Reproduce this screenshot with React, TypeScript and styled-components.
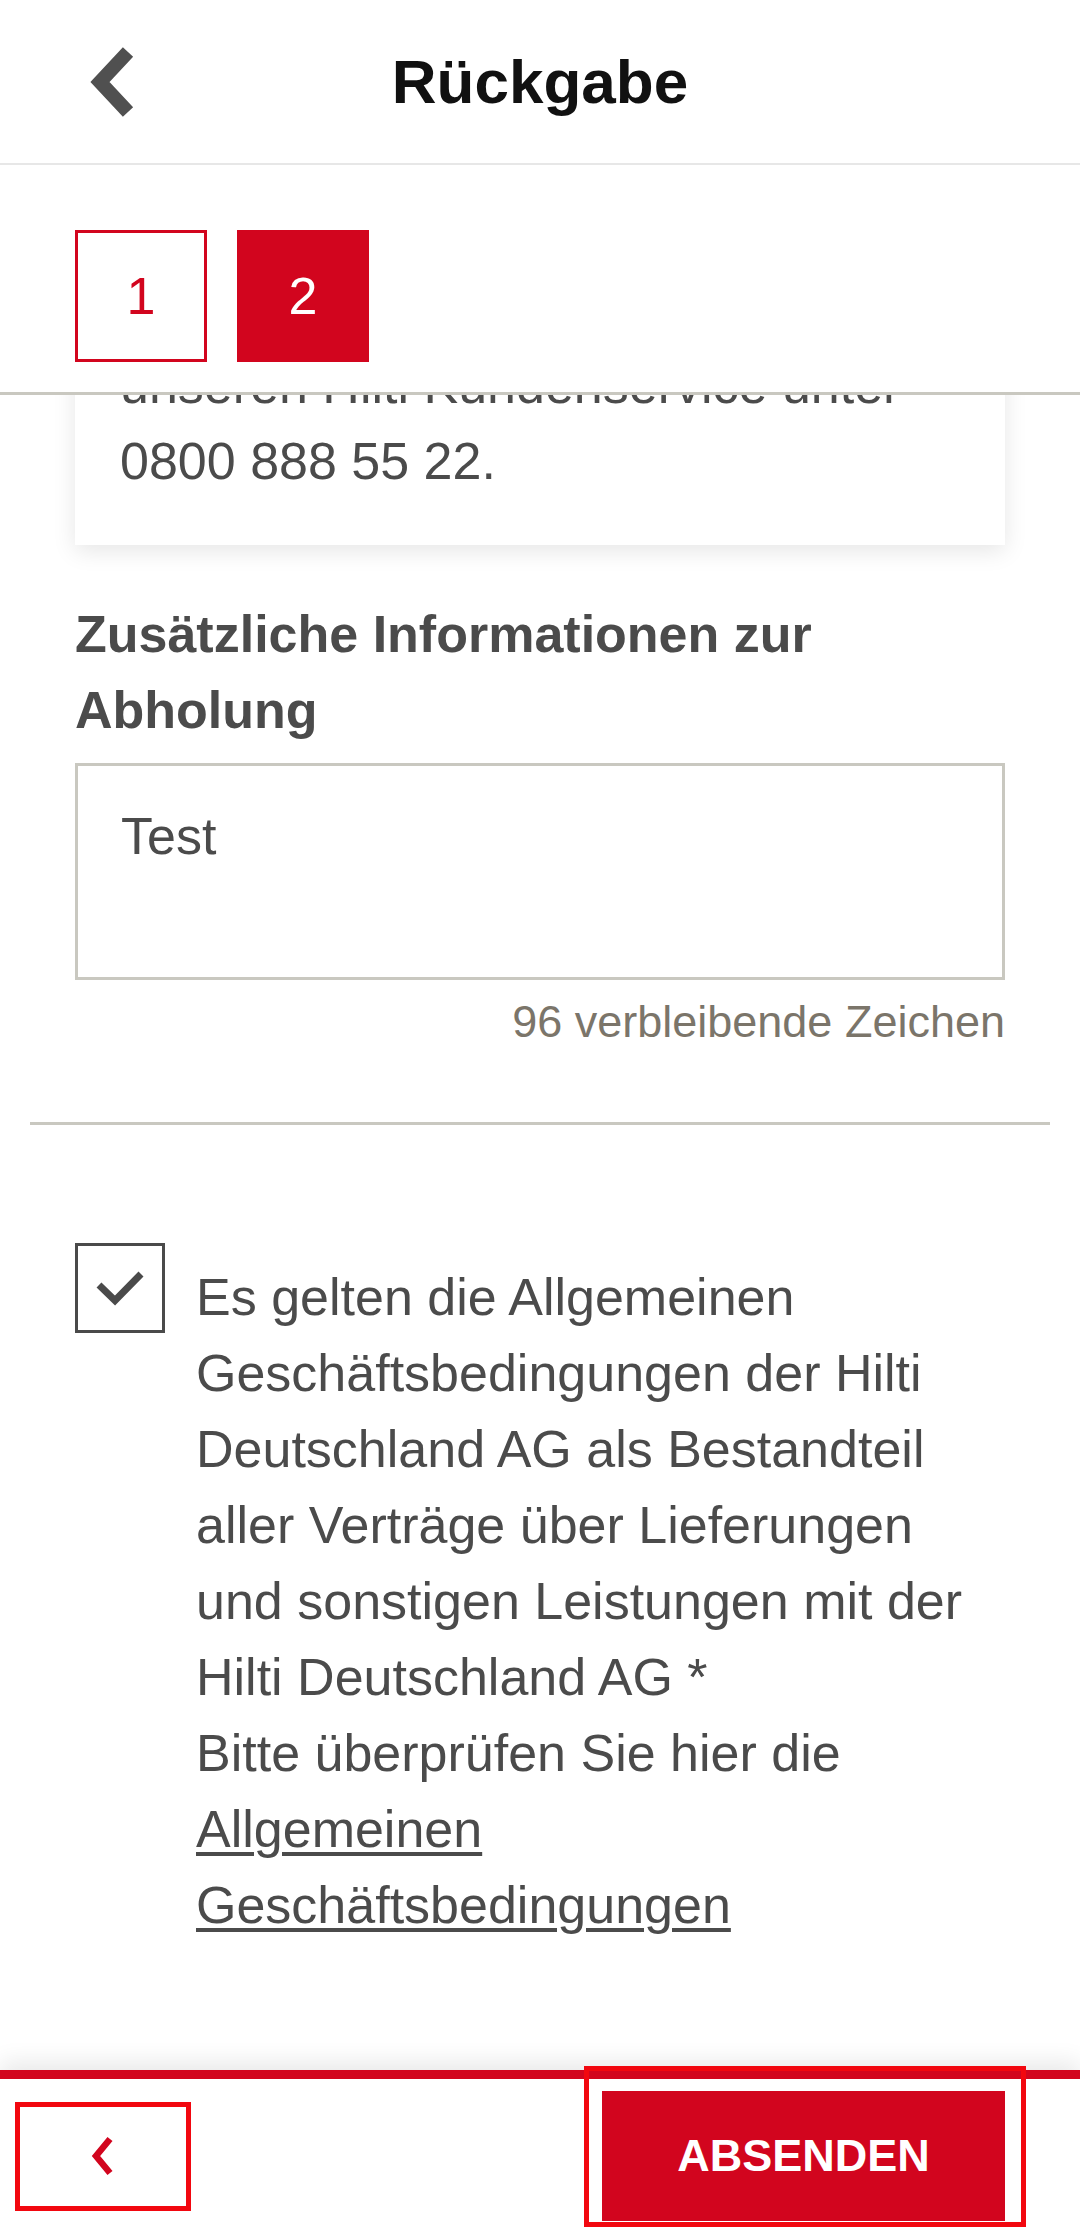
import React from 'react';
import styled, { createGlobalStyle } from 'styled-components';

const RED = '#d2051e';
const MARK = '#f2070f';
const TEXT = '#4b4b4b';
const RULE = '#c9c8c0';

const GlobalStyle = createGlobalStyle`
  html, body { margin: 0; padding: 0; background: #fff; }
  body {
    font-family: "Liberation Sans", Arial, Helvetica, sans-serif;
    -webkit-font-smoothing: antialiased;
  }
  * { box-sizing: border-box; }
`;

const Screen = styled.div`
  width: 1080px;
  height: 100vh;
  display: flex;
  flex-direction: column;
  overflow: hidden;
  background: #fff;
  color: ${TEXT};
`;

const Header = styled.header`
  flex: none;
  height: 165px;
  border-bottom: 2px solid #e7e7e7;
  display: grid;
  grid-template-columns: 165px 1fr 165px;
  align-items: center;
  background: #fff;
`;

const HeaderBack = styled.button`
  height: 100%;
  border: none;
  background: transparent;
  padding: 0 0 0 84px;
  display: flex;
  align-items: center;
  cursor: pointer;
`;

const Title = styled.h1`
  margin: 0;
  text-align: center;
  font-size: 62px;
  font-weight: 700;
  color: #111;
  letter-spacing: 0;
`;

const Stepper = styled.nav`
  flex: none;
  height: 230px;
  padding: 65px 75px 0;
  border-bottom: 3px solid ${RULE};
  display: flex;
  gap: 30px;
  background: #fff;
  position: relative;
  z-index: 2;
`;

const StepBox = styled.div<{ $active?: boolean }>`
  width: 132px;
  height: 132px;
  border: 3px solid ${RED};
  background: ${(p) => (p.$active ? RED : '#fff')};
  color: ${(p) => (p.$active ? '#fff' : RED)};
  font-size: 52px;
  display: flex;
  align-items: center;
  justify-content: center;
`;

const ScrollArea = styled.main`
  flex: 1;
  min-height: 0;
  overflow: hidden;
  padding: 0 30px;
  position: relative;
  z-index: 1;
`;

const ScrollContent = styled.div`
  transform: translateY(-95px);
`;

const Section = styled.section`
  padding: 0 45px;
`;

const Card = styled.div`
  background: #fff;
  box-shadow: 0 6px 22px rgba(0, 0, 0, 0.1);
  padding: 47px 45px 46px;
  font-size: 52px;
  line-height: 76px;
  color: ${TEXT};
`;

const Heading = styled.h2`
  margin: 51px 0 0;
  font-size: 52px;
  line-height: 76px;
  font-weight: 700;
  color: ${TEXT};
`;

const TextArea = styled.textarea`
  display: block;
  width: 100%;
  height: 217px;
  margin: 15px 0 0;
  border: 3px solid ${RULE};
  border-radius: 0;
  padding: 32px 43px;
  font-family: inherit;
  font-size: 52px;
  line-height: 76px;
  color: ${TEXT};
  background: #fff;
  resize: none;
  outline: none;
  overflow: hidden;
`;

const Counter = styled.div`
  margin-top: 8px;
  text-align: right;
  font-size: 45px;
  line-height: 68px;
  color: #7b756a;
`;

const Divider = styled.div`
  height: 3px;
  margin-top: 66px;
  background: ${RULE};
`;

const ConsentRow = styled.div`
  display: flex;
  align-items: flex-start;
  gap: 31px;
  margin-top: 118px;
`;

const CheckBox = styled.div`
  flex: none;
  width: 90px;
  height: 90px;
  border: 3px solid #4a4a4a;
  background: #fff;
`;

const ConsentText = styled.p`
  flex: 1;
  margin: 16px 0 0;
  font-size: 52px;
  line-height: 76px;
  color: ${TEXT};
`;

const Link = styled.a`
  color: inherit;
  text-decoration: underline;
  text-decoration-thickness: 4px;
  text-underline-offset: 5px;
`;

const Footer = styled.footer`
  flex: none;
  height: 158px;
  border-top: 9px solid ${RED};
  box-shadow: 0 -8px 22px rgba(0, 0, 0, 0.09);
  display: flex;
  align-items: center;
  justify-content: space-between;
  padding: 12px 75px 7px 15px;
  background: #fff;
  position: relative;
  z-index: 3;
`;

const BackButton = styled.button`
  width: 176px;
  height: 109px;
  border: 5px solid ${MARK};
  background: #fff;
  display: flex;
  align-items: center;
  justify-content: center;
  padding: 0;
  cursor: pointer;
`;

const SubmitWrap = styled.div`
  position: relative;
  &::after {
    content: '';
    position: absolute;
    top: -25px;
    left: -18px;
    right: -21px;
    bottom: -6px;
    border: 5px solid ${MARK};
    pointer-events: none;
  }
`;

const SubmitButton = styled.button`
  display: block;
  width: 403px;
  height: 130px;
  border: none;
  background: ${RED};
  color: #fff;
  font-family: inherit;
  font-size: 45px;
  font-weight: 700;
  cursor: pointer;
`;

export default function App() {
  return (
    <>
      <GlobalStyle />
      <Screen>
        <Header>
          <HeaderBack aria-label="Zurück">
            <svg width="60" height="80" viewBox="0 0 60 80">
              <polyline
                points="44,10 16,40 44,70"
                fill="none"
                stroke="#505050"
                strokeWidth="14"
                strokeLinejoin="miter"
                strokeLinecap="butt"
              />
            </svg>
          </HeaderBack>
          <Title>Rückgabe</Title>
          <div />
        </Header>

        <Stepper>
          <StepBox>1</StepBox>
          <StepBox $active>2</StepBox>
        </Stepper>

        <ScrollArea>
          <ScrollContent>
            <Section>
              <Card>unseren Hilti Kundenservice unter 0800 888 55 22.</Card>
              <Heading>Zusätzliche Informationen zur Abholung</Heading>
              <TextArea defaultValue="Test" readOnly />
              <Counter>96 verbleibende Zeichen</Counter>
            </Section>
            <Divider />
            <Section>
              <ConsentRow>
                <CheckBox>
                  <svg width="84" height="84" viewBox="0 0 84 84">
                    <polyline
                      points="21,39 37,54.5 63,28"
                      fill="none"
                      stroke="#4a4a4a"
                      strokeWidth="7"
                      strokeLinejoin="miter"
                    />
                  </svg>
                </CheckBox>
                <ConsentText>
                  Es gelten die Allgemeinen Geschäftsbedingungen der Hilti Deutschland AG als
                  Bestandteil aller Verträge über Lieferungen und sonstigen Leistungen mit der Hilti
                  Deutschland AG *
                  <br />
                  Bitte überprüfen Sie hier die{' '}
                  <Link href="#">Allgemeinen Geschäftsbedingungen</Link>
                </ConsentText>
              </ConsentRow>
            </Section>
          </ScrollContent>
        </ScrollArea>

        <Footer>
          <BackButton aria-label="Zurück">
            <svg width="26" height="40" viewBox="0 0 26 40">
              <polyline
                points="20,3 6,20 20,37"
                fill="none"
                stroke={RED}
                strokeWidth="6.5"
                strokeLinejoin="miter"
              />
            </svg>
          </BackButton>
          <SubmitWrap>
            <SubmitButton>ABSENDEN</SubmitButton>
          </SubmitWrap>
        </Footer>
      </Screen>
    </>
  );
}
